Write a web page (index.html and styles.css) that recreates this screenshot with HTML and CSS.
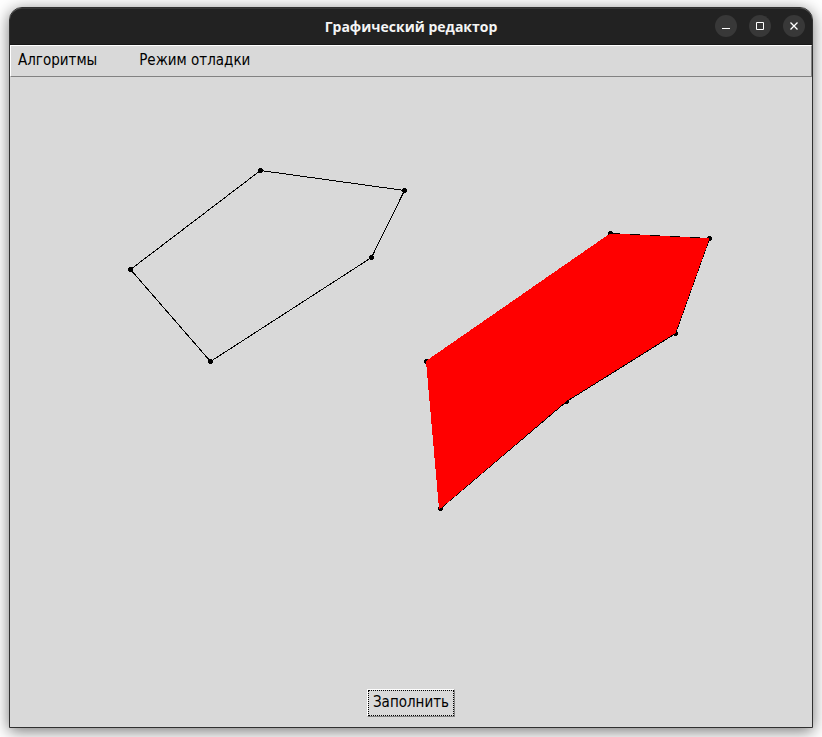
FILE: index.html
```html
<!DOCTYPE html>
<html lang="ru">
<head>
<meta charset="utf-8">
<title>Графический редактор</title>
<link rel="stylesheet" href="styles.css">
</head>
<body>
<main class="window">
  <header class="titlebar">
    <h1 class="title">Графический редактор</h1>
    <div class="controls">
      <button class="control" type="button" aria-label="Свернуть"><svg viewBox="0 0 22 22"><path d="M7 13h8v1H7z" fill="#fff"/></svg></button>
      <button class="control" type="button" aria-label="Развернуть"><svg viewBox="0 0 22 22"><path d="M7.500 7.500h7v7h-7z" fill="none" stroke="#fff"/></svg></button>
      <button class="control" type="button" aria-label="Закрыть"><svg viewBox="0 0 22 22"><path d="M7.500 7.500l7 7M14.500 7.500l-7 7" fill="none" stroke="#fff" stroke-width="1.3"/></svg></button>
    </div>
  </header>
  <nav class="menubar">
    <button class="menu" type="button">Алгоритмы</button>
    <button class="menu" type="button">Режим отладки</button>
  </nav>
  <svg class="canvas" shape-rendering="crispEdges" role="img" aria-label="Холст">
    <g transform="translate(-10 -77)">
      <path d="M130.500 269.500L260.500 170.500L404.500 190.500L371.500 257.500L210.500 361.500Z" fill="none" stroke="#000"/>
      <g>
        <circle cx="130.500" cy="269.500" r="2.500"/>
        <circle cx="260.500" cy="170.500" r="2.500"/>
        <circle cx="404.500" cy="190.500" r="2.500"/>
        <circle cx="371.500" cy="257.500" r="2.500"/>
        <circle cx="210.500" cy="361.500" r="2.500"/>
        <circle cx="426.500" cy="361.500" r="2.500"/>
        <circle cx="610.500" cy="233.500" r="2.500"/>
        <circle cx="709.500" cy="238.500" r="2.500"/>
        <circle cx="675.500" cy="333.500" r="2.500"/>
        <circle cx="566.500" cy="401.500" r="2.500"/>
        <circle cx="440.500" cy="508.500" r="2.500"/>
      </g>
      <path d="M610.500 233.500L709.500 238.500L675.500 333.500L566.500 401.500L440.500 508.500" fill="none" stroke="#000"/>
      <path d="M426 361L610 233.500L709.500 238.500L675.500 333L566.500 401L440.500 508.500L439 508.500Z" fill="#f00"/>
    </g>
  </svg>
  <footer class="actions">
    <button class="fill" type="button">Заполнить</button>
  </footer>
</main>
</body>
</html>
```
FILE: styles.css
```css
* { box-sizing: border-box; }
body {
  margin: 0;
  height: 100vh;
  padding: 7px 9px 9px;
  background: #fff;
  color: #000;
  font: 15px/18px "DejaVu Sans Condensed", "DejaVu Sans", sans-serif;
  overflow: hidden;
}
button { font: inherit; color: inherit; }
.window {
  height: 100%;
  display: flex;
  flex-direction: column;
  border: 1px solid #303030;
  border-radius: 13px 13px 0 0;
  background: #d9d9d9;
  box-shadow: 0 3px 16px rgba(0, 0, 0, .55);
}
.titlebar {
  height: 37px;
  display: grid;
  grid-template-columns: 1fr auto 1fr;
  align-items: center;
  padding-bottom: 1px;
  border-top: 1px solid #363636;
  border-bottom: 1px solid #171717;
  border-radius: 12px 12px 0 0;
  background: #222;
}
.title {
  grid-column: 2;
  margin: 0;
  color: #f5f5f5;
  font: bold 14px/20px "Open Sans", "Noto Sans", sans-serif;
  padding-top: 2px;
}
.controls { display: flex; justify-content: flex-end; gap: 12px; padding-right: 7px; }
.control {
  width: 22px;
  height: 22px;
  padding: 0;
  border: 0;
  border-radius: 50%;
  background: #383838;
}
.control svg { display: block; }
.menubar {
  height: 32px;
  display: flex;
  align-items: center;
  gap: 42px;
  padding: 0 7px 2px;
  border: 1px solid;
  border-color: #fff #828282 #828282 #fff;
}
.menu { padding: 0; border: 0; background: none; }
.canvas { display: block; width: 100%; flex: 1; min-height: 0; }
.actions { display: flex; justify-content: center; padding-bottom: 10px; }
.fill {
  height: 28px;
  padding: 0 5px 2px;
  border: 1px solid;
  border-color: #fff #828282 #828282 #fff;
  background: #d9d9d9;
  outline: 1px dotted #000;
  outline-offset: -2px;
}
```
